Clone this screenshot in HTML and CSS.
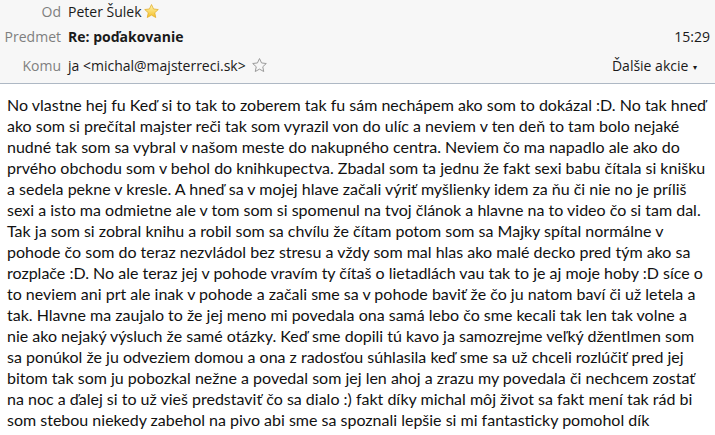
FILE: index.html
```html
<!DOCTYPE html>
<html lang="sk">
<head>
<meta charset="utf-8">
<link rel="stylesheet" href="styles.css">
</head>
<body>
<div class="mail">
  <header class="head">
    <div class="row r1">
      <span class="label">Od</span>
      <span class="value">Peter Šulek</span>
      <svg class="star" width="17" height="17" viewBox="0 0 24 24"><defs><linearGradient id="g" x1="0" y1="0" x2="0" y2="1"><stop offset="0" stop-color="#fff6b0"/><stop offset="1" stop-color="#f5c02a"/></linearGradient></defs><path d="M12 2.2l2.9 6.2 6.7.8-5 4.6 1.4 6.7L12 17.1l-6 3.4 1.4-6.7-5-4.6 6.7-.8z" fill="url(#g)" stroke="#e0a820" stroke-width="1" stroke-linejoin="round"/></svg>
    </div>
    <div class="row r2">
      <span class="label">Predmet</span>
      <span class="value subject">Re: poďakovanie</span>
      <span class="time">15:29</span>
    </div>
    <div class="row r3">
      <span class="label">Komu</span>
      <span class="value">ja &lt;michal@majsterreci.sk&gt;</span>
      <svg class="star empty" width="17" height="17" viewBox="0 0 24 24"><path d="M12 2.2l2.9 6.2 6.7.8-5 4.6 1.4 6.7L12 17.1l-6 3.4 1.4-6.7-5-4.6 6.7-.8z" fill="none" stroke="#9a9a9a" stroke-width="1.4" stroke-linejoin="round"/></svg>
      <span class="actions">Ďalšie akcie <span class="caret">▾</span></span>
    </div>
  </header>
  <div class="body">
    <p class="text">No vlastne hej fu Keď si to tak to zoberem tak fu sám nechápem ako som to dokázal :D. No tak hneď<br>ako som si prečítal majster reči tak som vyrazil von do ulíc a neviem v ten deň to tam bolo nejaké<br>nudné tak som sa vybral v našom meste do nakupného centra. Neviem čo ma napadlo ale ako do<br>prvého obchodu som v behol do knihkupectva. Zbadal som ta jednu že fakt sexi babu čítala si knišku<br>a sedela pekne v kresle. A hneď sa v mojej hlave začali výriť myšlienky idem za ňu či nie no je príliš<br>sexi a isto ma odmietne ale v tom som si spomenul na tvoj článok a hlavne na to video čo si tam dal.<br>Tak ja som si zobral knihu a robil som sa chvílu že čítam potom som sa Majky spítal normálne v<br>pohode čo som do teraz nezvládol bez stresu a vždy som mal hlas ako malé decko pred tým ako sa<br>rozplače :D. No ale teraz jej v pohode vravím ty čítaš o lietadlách vau tak to je aj moje hoby :D síce o<br>to neviem ani prt ale inak v pohode a začali sme sa v pohode baviť že čo ju natom baví či už letela a<br>tak. Hlavne ma zaujalo to že jej meno mi povedala ona samá lebo čo sme kecali tak len tak volne a<br>nie ako nejaký výsluch že samé otázky. Keď sme dopili tú kavo ja samozrejme veľký džentlmen som<br>sa ponúkol že ju odveziem domou a ona z radosťou súhlasila keď sme sa už chceli rozlúčiť pred jej<br>bitom tak som ju pobozkal nežne a povedal som jej len ahoj a zrazu my povedala či nechcem zostať<br>na noc a ďalej si to už vieš predstaviť čo sa dialo :) fakt díky michal môj život sa fakt mení tak rád bi<br>som stebou niekedy zabehol na pivo abi sme sa spoznali lepšie si mi fantasticky pomohol dík</p>
  </div>
</div>
</body>
</html>
```

FILE: styles.css
```css
html, body {
  margin: 0;
  padding: 0;
  background: #ffffff;
}
.mail {
  width: 715px;
  height: 435px;
  overflow: hidden;
}
.head {
  background: #f7f7f7;
  border-bottom: 1px solid #aeb8c4;
  height: 84px;
  box-sizing: border-box;
  font-family: "Open Sans", "Noto Sans", sans-serif;
  font-size: 14px;
  color: #1a1a1a;
}
.row {
  display: flex;
  align-items: center;
  padding-right: 5px;
}
.r1 { height: 23px; }
.r2 { height: 27px; }
.r3 { height: 31px; }
.label {
  width: 61px;
  text-align: right;
  color: #7f7f7f;
  flex: none;
}
.value {
  margin-left: 7px;
  white-space: nowrap;
}
.subject {
  font-weight: bold;
}
.star {
  margin-left: 1px;
  flex: none;
}
.star.empty {
  margin-left: 5px;
}
.time {
  margin-left: auto;
}
.actions {
  margin-left: auto;
  margin-right: 13px;
}
.caret {
  font-size: 8px;
  margin-left: 1px;
  position: relative;
  top: -1px;
}
.body {
  padding: 10px 0 0 7px;
}
.text {
  margin: 0;
  font-family: "Lato", "Liberation Sans", sans-serif;
  font-size: 16px;
  line-height: 21px;
  color: #111111;
  white-space: nowrap;
}
```
